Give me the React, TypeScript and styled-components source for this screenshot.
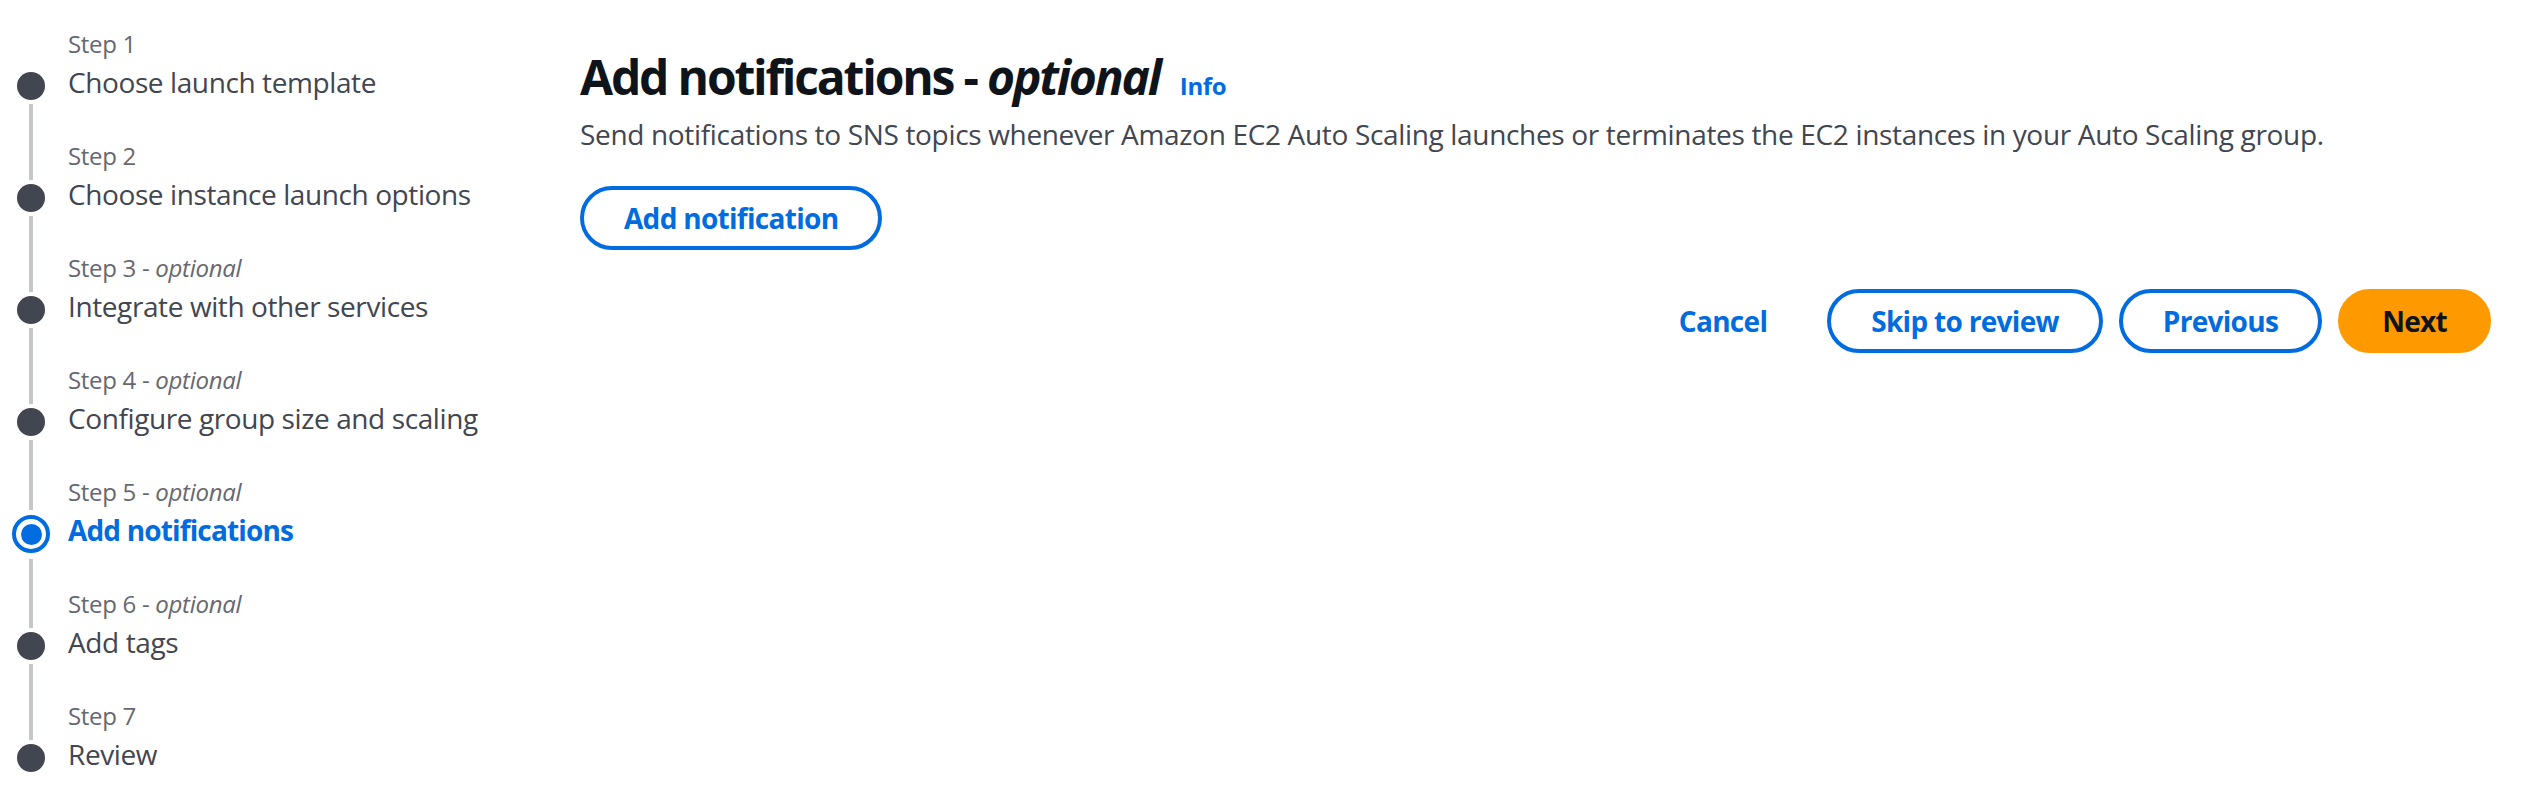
import React from "react";
import styled, { createGlobalStyle } from "styled-components";

const GlobalStyle = createGlobalStyle`
  html, body { margin: 0; padding: 0; background: #ffffff; }
  body { font-family: "Open Sans", "Noto Sans", sans-serif; color: #0f141a; }
  * { box-sizing: border-box; }
`;

const Page = styled.div`
  display: grid;
  grid-template-columns: 580px 1fr;
  min-height: 796px;
`;

const Nav = styled.ol`
  list-style: none;
  margin: 0;
  padding: 28px 0 0 12px;
  display: flex;
  flex-direction: column;
`;

const StepItem = styled.li`
  display: grid;
  grid-template-columns: 38px 1fr;
  column-gap: 18px;
  height: 112px;
`;

const Indicator = styled.div`
  display: flex;
  flex-direction: column;
  align-items: center;
`;

const Line = styled.div<{ $h?: number; $hidden?: boolean; $grow?: boolean }>`
  width: 4px;
  background: ${(p) => (p.$hidden ? "transparent" : "#c6c6cd")};
  height: ${(p) => (p.$h ? `${p.$h}px` : "auto")};
  flex: ${(p) => (p.$grow ? "1" : "none")};
`;

const Dot = styled.div`
  width: 28px;
  height: 28px;
  border-radius: 50%;
  background: #424650;
  margin: 4px 0;
  flex: none;
`;

const Ring = styled.div`
  width: 38px;
  height: 38px;
  border-radius: 50%;
  border: 4px solid #006ce0;
  margin: 5px 0 6px;
  display: flex;
  align-items: center;
  justify-content: center;
  flex: none;
  &::after {
    content: "";
    width: 21px;
    height: 21px;
    border-radius: 50%;
    background: #006ce0;
  }
`;

const StepText = styled.div`
  display: flex;
  flex-direction: column;
`;

const StepLabel = styled.span`
  font-size: 24px;
  line-height: 32px;
  letter-spacing: -0.3px;
  color: #656871;
  white-space: nowrap;
  i { font-style: italic; }
`;

const StepTitle = styled.span<{ $active?: boolean }>`
  margin-top: 2px;
  font-size: 28px;
  line-height: 40px;
  white-space: nowrap;
  letter-spacing: ${(p) => (p.$active ? "-0.85px" : "-0.4px")};
  color: ${(p) => (p.$active ? "#006ce0" : "#424650")};
  font-weight: ${(p) => (p.$active ? 700 : 400)};
`;

const Main = styled.main`
  padding: 47px 45px 0 0;
  display: flex;
  flex-direction: column;
`;

const HeaderRow = styled.div`
  display: flex;
  align-items: baseline;
  gap: 20px;
`;

const Title = styled.h1`
  margin: 0;
  font-size: 48px;
  line-height: 60px;
  font-weight: 700;
  letter-spacing: -2.2px;
  color: #0f141a;
  i { font-style: italic; }
`;

const InfoLink = styled.a`
  font-size: 24px;
  font-weight: 700;
  letter-spacing: -0.4px;
  color: #006ce0;
  text-decoration: none;
`;

const Description = styled.p`
  margin: 7px 0 0;
  font-size: 28px;
  line-height: 40px;
  letter-spacing: -0.33px;
  color: #424650;
`;

const Button = styled.button<{ $variant?: "normal" | "primary" | "link" }>`
  font-family: "Open Sans", "Noto Sans", sans-serif;
  font-size: 28px;
  line-height: 40px;
  font-weight: 700;
  letter-spacing: -0.7px;
  padding: 8px 40px;
  border-radius: 40px;
  border: 4px solid
    ${(p) =>
      p.$variant === "primary" ? "#ff9900" : p.$variant === "link" ? "transparent" : "#006ce0"};
  background: ${(p) => (p.$variant === "primary" ? "#ff9900" : "#ffffff")};
  color: ${(p) => (p.$variant === "primary" ? "#0f141a" : "#006ce0")};
  cursor: pointer;
  white-space: nowrap;
`;

const ActionBlock = styled.div`
  margin-top: 32px;
`;

const Footer = styled.div`
  margin-top: 39px;
  display: flex;
  justify-content: flex-end;
  gap: 16px;
`;

type Step = { label: string; optional?: boolean; title: string; active?: boolean };

const steps: Step[] = [
  { label: "Step 1", title: "Choose launch template" },
  { label: "Step 2", title: "Choose instance launch options" },
  { label: "Step 3", optional: true, title: "Integrate with other services" },
  { label: "Step 4", optional: true, title: "Configure group size and scaling" },
  { label: "Step 5", optional: true, title: "Add notifications", active: true },
  { label: "Step 6", optional: true, title: "Add tags" },
  { label: "Step 7", title: "Review" },
];

export default function App() {
  return (
    <>
      <GlobalStyle />
      <Page>
        <Nav>
          {steps.map((s, i) => {
            const first = i === 0;
            const last = i === steps.length - 1;
            return (
              <StepItem key={s.label}>
                <Indicator>
                  <Line $h={s.active ? 34 : 40} $hidden={first} />
                  {s.active ? <Ring /> : <Dot />}
                  <Line $grow $hidden={last} />
                </Indicator>
                <StepText>
                  <StepLabel>
                    {s.label}
                    {s.optional && (
                      <>
                        {" - "}
                        <i>optional</i>
                      </>
                    )}
                  </StepLabel>
                  <StepTitle $active={s.active}>{s.title}</StepTitle>
                </StepText>
              </StepItem>
            );
          })}
        </Nav>
        <Main>
          <HeaderRow>
            <Title>
              Add notifications - <i>optional</i>
            </Title>
            <InfoLink href="#">Info</InfoLink>
          </HeaderRow>
          <Description>
            Send notifications to SNS topics whenever Amazon EC2 Auto Scaling launches or terminates the EC2
            instances in your Auto Scaling group.
          </Description>
          <ActionBlock>
            <Button>Add notification</Button>
          </ActionBlock>
          <Footer>
            <Button $variant="link">Cancel</Button>
            <Button>Skip to review</Button>
            <Button>Previous</Button>
            <Button $variant="primary">Next</Button>
          </Footer>
        </Main>
      </Page>
    </>
  );
}
